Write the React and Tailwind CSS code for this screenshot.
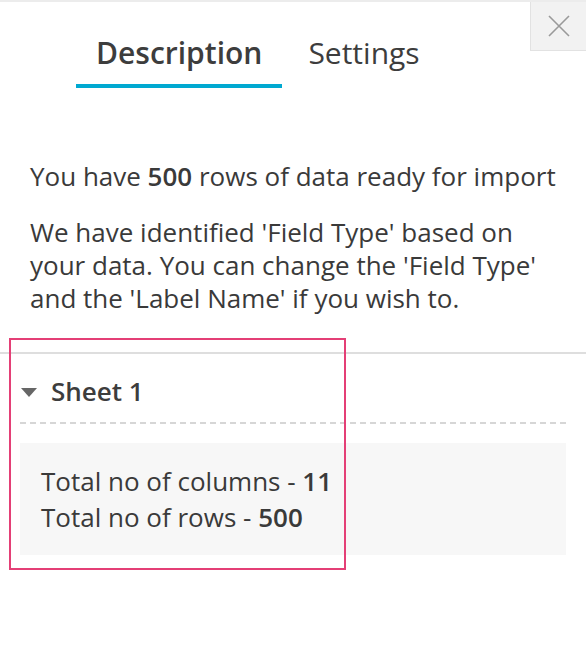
import React from 'react';

const App = () => {
  return (
    <div className="relative w-[586px] h-[670px] bg-white text-[#3a3a3a] font-['Open_Sans',sans-serif]">
      <div className="h-[2px] bg-[#ececec]" />

      {/* Close */}
      <button className="absolute top-[2px] right-0 w-[56px] h-[49px] bg-[#f2f2f2] border-l border-b border-[#e2e2e2] flex items-center justify-center">
        <svg width="22" height="22" viewBox="0 0 22 22" stroke="#9a9a9a" strokeWidth="1.6" fill="none">
          <path d="M1 1 L21 21 M21 1 L1 21" />
        </svg>
      </button>

      {/* Tabs */}
      <div className="flex pl-[76px] pt-[30px] gap-[6px]">
        <div className="px-[20px] pb-[10px] border-b-4 border-[#00a9d1] text-[30px] leading-[42px] font-semibold text-[#3d3d3d]">
          Description
        </div>
        <div className="px-[20px] pb-[10px] text-[30px] leading-[42px] text-[#3d3d3d]">Settings</div>
      </div>

      {/* Body */}
      <div className="px-[30px] pt-[72px] text-[26px] leading-[33px]">
        <p>You have <b className="font-semibold">500</b> rows of data ready for import</p>
        <p className="mt-[23px]">
          We have identified 'Field Type' based on your data. You can change the 'Field Type' and the 'Label Name' if you wish to.
        </p>
      </div>

      <div className="mt-[37px] border-t-2 border-[#dedede]" />

      {/* Sheet */}
      <div className="px-[20px]">
        <div className="flex items-center gap-[14px] h-[70px] pt-[6px] border-b-2 border-dashed border-[#d6d6d6]">
          <svg width="16" height="9" viewBox="0 0 16 9" className="ml-[1px] mt-[2px]">
            <path d="M0 0 L16 0 L8 9 Z" fill="#666" />
          </svg>
          <span className="text-[26px] font-semibold text-[#3d3d3d]">Sheet 1</span>
        </div>
        <div className="mt-[19px] bg-[#f7f7f7] px-[21px] py-[20px] text-[26px] leading-[36px]">
          <p>Total no of columns - <b className="font-semibold">11</b></p>
          <p>Total no of rows - <b className="font-semibold">500</b></p>
        </div>
      </div>

      {/* Highlight overlay */}
      <div className="absolute left-[9px] top-[338px] w-[337px] h-[232px] border-2 border-[#e43f76] pointer-events-none" />
    </div>
  );
};

export default App;
